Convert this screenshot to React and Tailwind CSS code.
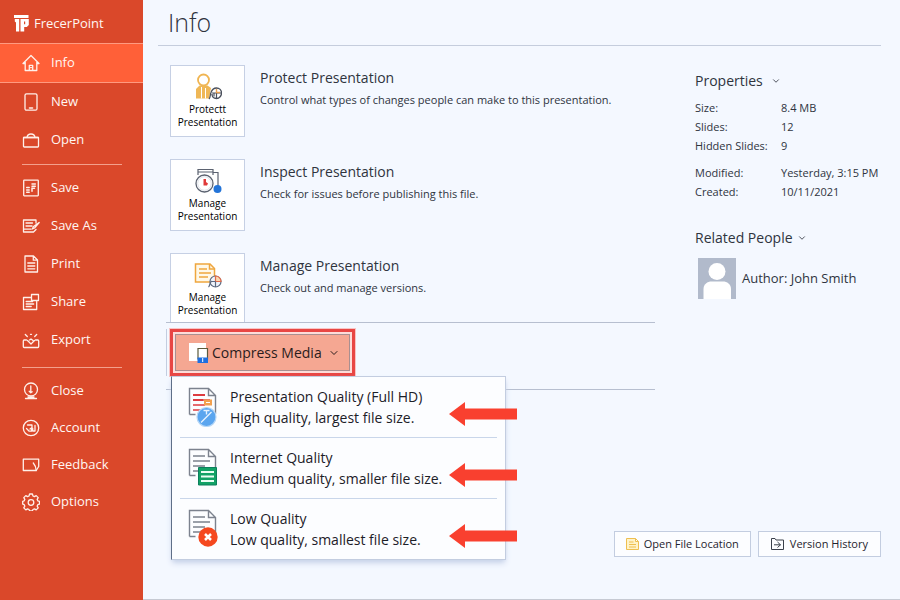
import clsx from "clsx";
import { ChevronDown } from "lucide-react";

function SideIcon({ children }) {
  return (
    <svg
      viewBox="0 0 18 18"
      className="w-[18px] h-[18px] shrink-0"
      fill="none"
      stroke="#fff0ea"
      strokeWidth="1.3"
      strokeLinejoin="round"
      strokeLinecap="round"
      aria-hidden="true"
    >
      {children}
    </svg>
  );
}

const icons = {
  info: (
    <SideIcon>
      <path d="M1 9.500 9 1.500l8 8M3.200 8v8.500h11.600V8M1 9.500h2M17 9.500h-2" />
      <path d="M7.300 16v-4.600h3.400V16M8.600 13.600h.8" />
    </SideIcon>
  ),
  new: (
    <SideIcon>
      <rect x="3" y="0.800" width="12" height="16.400" rx="1.500" />
      <path d="M7.500 15h3" strokeWidth="1.600" />
    </SideIcon>
  ),
  open: (
    <SideIcon>
      <rect x="1.500" y="6.500" width="15" height="9.500" rx="0.800" />
      <path d="M1.500 6.500h15M5 6.300C5.300 4 7 3 9 3s3.700 1 4 3.300" />
    </SideIcon>
  ),
  save: (
    <SideIcon>
      <rect x="1.700" y="1.200" width="14.600" height="15.600" rx="0.500" />
      <path d="M10 5h3.300M10 7.200h3.300M10 9v3.200M4.700 8.600h2.500M4.700 11h2.500M4.700 13.300h2.500M12.500 9.200H10" strokeWidth="1.500" />
    </SideIcon>
  ),
  saveAs: (
    <SideIcon>
      <path d="M14 6V3H1.500v12h10l2.500-2.500M4 6h6.500M4 9h6M1.500 12.200h7.500M10.300 12l1.200-2.500L17.200 5.500 12.500 11z" />
    </SideIcon>
  ),
  print: (
    <SideIcon>
      <path d="M3 1h8.500L15.500 5v12H3zM11.300 1v4.200h4" />
      <path d="M5.800 8h7M5.800 11h7M5.800 13.800h7" />
    </SideIcon>
  ),
  share: (
    <SideIcon>
      <path d="M9 4.500H1.500v12h13.200V8.500M4.200 8.500h6.500M4.200 11h7.500M4.200 13.500h5" />
      <rect x="9.500" y="1.500" width="7" height="6" />
    </SideIcon>
  ),
  export: (
    <SideIcon>
      <path d="M4.500 9H2.200c-.5 0-.9.400-.9.900v5.700c0 .5.400.9.900.9h13.600c.5 0 .9-.4.900-.9V9.900c0-.5-.4-.9-.9-.9h-2.300" />
      <path d="M5.500 9.500 9 13l3.500-3.500M7.500 9 9 8l2 1.500M3.300 3.500l2 2M14.700 3.500l-2 2M8.500 3.300h1" />
    </SideIcon>
  ),
  close: (
    <SideIcon>
      <circle cx="9" cy="7.500" r="6.500" />
      <path d="M3.500 16.500h11M8.800 4v6.500M7.200 9.200l1.600 1.600 1.400-1M6 15h6" />
    </SideIcon>
  ),
  account: (
    <SideIcon>
      <circle cx="9" cy="9" r="7.700" />
      <path d="M5.500 6h4.500v2.500L8 10M4.500 9.500l2.700 2.700h2.300V10M13 6.500v5.500h-2.300V9.500" />
    </SideIcon>
  ),
  feedback: (
    <SideIcon>
      <path d="M1.300 3.200h15.400v7.300l-2.500 4H1.300z" />
      <path d="M11.300 7c1.600 1.800 2.600 4 2.900 7.500" />
    </SideIcon>
  ),
  options: (
    <SideIcon>
      <path d="M7.600 1h2.800l.6 2 1.400.6 1.800-1 2 2-1 1.800.6 1.400 1.700.5v2.800l-1.700.6-.6 1.400 1 1.800-2 2-1.800-1-1.400.6-.6 1.300H7.600L7 16.500l-1.400-.6-1.800 1-2-2 1-1.800-.6-1.400L.7 11.100V8.300l1.500-.5.600-1.400-1-1.800 2-2 1.800 1L7 3z" />
      <circle cx="9" cy="9.500" r="2.800" />
    </SideIcon>
  ),
};

const navGroups = [
  [
    { label: "Info", icon: icons.info, active: true },
    { label: "New", icon: icons.new },
    { label: "Open", icon: icons.open },
  ],
  [
    { label: "Save", icon: icons.save },
    { label: "Save As", icon: icons.saveAs },
    { label: "Print", icon: icons.print },
    { label: "Share", icon: icons.share },
    { label: "Export", icon: icons.export },
  ],
  [
    { label: "Close", icon: icons.close },
    { label: "Account", icon: icons.account },
    { label: "Feedback", icon: icons.feedback },
    { label: "Options", icon: icons.options },
  ],
];

function Logo() {
  return (
    <svg viewBox="0 0 16 17" className="w-4 h-[17px]" fill="#fff" aria-hidden="true">
      <path d="M0 0h14.500v3H0zM.8 4h4.400v12.500H2V7.500L.8 6.500zM6.500 4h8.300v6l-2 2h-2.600v4.500H6.500z" />
      <path d="M10 6.500h1.200v2.800H10z" fill="#dc4a2a" />
    </svg>
  );
}

function Sidebar() {
  return (
    <aside className="w-[143px] shrink-0 bg-[#da482a] text-[#fff6f2]">
      <div className="flex items-center gap-1 h-[43px] pl-[14px] pt-1 text-[13px]">
        <Logo />
        FrecerPoint
      </div>
      <nav>
        {navGroups.map((group, i) => (
          <div key={i}>
            {i > 0 && (
              <hr className={clsx("ml-[22px] mr-[21px] border-[#f3a08c] mb-1", i === 1 ? "mt-[5px]" : "mt-2")} />
            )}
            {group.map((item) => (
              <button
                key={item.label}
                type="button"
                className={clsx(
                  "flex items-center gap-[11px] w-full pl-[22px] text-[13px]",
                  item.active && "h-10 bg-[#ff6038] border-y border-[#ff9a80]",
                  !item.active && (i === 2 ? "h-[37px]" : "h-[38px]")
                )}
              >
                {item.icon}
                {item.label}
              </button>
            ))}
          </div>
        ))}
      </nav>
    </aside>
  );
}

function ProtectIcon() {
  return (
    <svg viewBox="0 0 28 28" className="w-7 h-7" fill="none" aria-hidden="true">
      <circle cx="9.500" cy="7" r="5.500" stroke="#f0b552" strokeWidth="1.800" />
      <path d="M2 16 5.500 12.500h8L17 15l-2 10.500H2z" fill="#efb756" />
      <path d="M7.500 14v11.500M11.500 15v10.500" stroke="#fff" strokeWidth="1" />
      <path d="M15 26c1.500-1.500 1-4 2-6.500.9-2.500 3-4.500 5.500-4.500 3 0 5 2.300 5 5s-2 5.500-5 5.500-4.500-2-4.500-4.500" fill="#fff" stroke="#4a505c" strokeWidth="1.300" />
      <path d="M18 20h9M22.500 20v5M20 20v3.500" stroke="#4a505c" strokeWidth="1.200" />
      <path d="M22.500 16v3.500H26" stroke="#e9a050" strokeWidth="1.400" />
    </svg>
  );
}

function InspectIcon() {
  return (
    <svg viewBox="0 0 28 28" className="w-7 h-7" fill="none" stroke="#5b6270" strokeWidth="1.200" aria-hidden="true">
      <path d="M4 8V2.500h15V8M4 5h15M19 5.500h5V20" />
      <circle cx="10.500" cy="16.500" r="8.500" fill="#fff" strokeWidth="1.300" />
      <circle cx="10.500" cy="16.500" r="6.800" stroke="#d5dae3" strokeWidth="0.800" />
      <path d="M9.500 12H12v3l2 1.500-1 2H9.500z" fill="#e03a3a" stroke="none" />
      <circle cx="23.500" cy="22" r="4" fill="#2374d8" stroke="none" />
    </svg>
  );
}

function ManageIcon() {
  return (
    <svg viewBox="0 0 28 28" className="w-7 h-7" fill="none" stroke="#efa63e" strokeWidth="1.500" aria-hidden="true">
      <path d="M1.500 3h14.500l4.500 4.500V21h-19z" fill="#fff8e8" />
      <path d="M15.500 3v5h5M5 8h8M5 12h12M5 16h9" />
      <circle cx="21.500" cy="20.500" r="5.500" fill="#eef3fb" stroke="#5d6a80" strokeWidth="1.200" />
      <path d="M21.500 15v5.500H27A5.500 5.500 0 0 0 21.500 15z" fill="#f8d8b0" stroke="#e26a4a" strokeWidth="1.200" />
      <path d="M21.500 20.500V26M16.500 20.500h5M14.500 26c1.500-1 1-4 3-6" stroke="#5d6a80" strokeWidth="1.200" />
    </svg>
  );
}

const sections = [
  {
    title: "Protect Presentation",
    text: "Control what types of changes people can make to this presentation.",
    button: "Protectt",
    icon: <ProtectIcon />,
  },
  {
    title: "Inspect Presentation",
    text: "Check for issues before publishing this file.",
    button: "Manage",
    icon: <InspectIcon />,
  },
  {
    title: "Manage Presentation",
    text: "Check out and manage versions.",
    button: "Manage",
    icon: <ManageIcon />,
  },
];

function Section({ title, text, button, icon, last }) {
  return (
    <section className="flex gap-[15px] pl-1">
      <button
        type="button"
        className={clsx(
          "flex flex-col items-center w-[75px] shrink-0 pt-[7px] bg-white border border-[#c6d0e4] text-[10px] leading-[13px] font-medium text-black",
          last ? "h-[69px] border-b-0" : "h-[72px]"
        )}
      >
        {icon}
        <span className="mt-[2px]">
          {button}
          <br />
          Presentation
        </span>
      </button>
      <div className="pt-[3px]">
        <h2 className="text-sm leading-5">{title}</h2>
        <p className="mt-1 text-[11px] leading-4">{text}</p>
      </div>
    </section>
  );
}

function PageIcon({ lines = "#7b818d", children }) {
  return (
    <svg viewBox="0 0 30 40" className="w-[30px] h-10 shrink-0" fill="none" aria-hidden="true">
      <path d="M1.500 27.500v-26h19l7 7V27M1.500 27.500h6M20.500 1.500v7h7" stroke="#7c828e" strokeWidth="1.400" />
      <path d="M5 8h12M5 13h17M5 18h12M5 23h8" stroke={lines} strokeWidth="1.500" />
      {children}
    </svg>
  );
}

const qualities = [
  {
    title: "Presentation Quality (Full HD)",
    text: "High quality, largest file size.",
    icon: (
      <PageIcon lines="#dd3b40">
        <path d="M5 8h12M5 13h10" stroke="#dd3b40" strokeWidth="2" />
        <path d="M16 12.500h8v6h-8z" fill="#f3a04e" />
        <path d="M18 15.500h4" stroke="#fff" />
        <circle cx="18.500" cy="30" r="9.500" fill="#5aa5ef" stroke="#b5d6f6" strokeWidth="1.200" />
        <path d="m13 35.500 10.500-10.500M15.500 23.500h6M18.500 23.500v4" stroke="#e5f2ff" strokeWidth="1.400" />
      </PageIcon>
    ),
  },
  {
    title: "Internet Quality",
    text: "Medium quality, smaller file size.",
    icon: (
      <PageIcon>
        <path d="M10.500 19.500h18V37h-18z" fill="#12a266" stroke="#0c7f5d" />
        <path d="M13 24h13M13 28.500h13M13 33h13" stroke="#eafff4" strokeWidth="1.800" />
      </PageIcon>
    ),
  },
  {
    title: "Low Quality",
    text: "Low quality, smallest file size.",
    icon: (
      <PageIcon>
        <circle cx="20" cy="28" r="9.700" fill="#f5481f" />
        <path d="m17 25 6 6M23 25l-6 6" stroke="#fff" strokeWidth="2.500" />
      </PageIcon>
    ),
  },
];

function CompressMenu() {
  return (
    <ul className="absolute left-1 top-full w-[335px] px-2 bg-[#fcfdff] border border-[#c3cde0] border-l-[#5f6f88] shadow-md shadow-[#c9d4ea] text-[#1c2028]">
      {qualities.map((q, i) => (
        <li key={q.title} className={clsx("relative", i > 0 && "border-t border-[#c9d6ea]")}>
          <button type="button" className="flex items-center gap-3 w-full h-[60px] pl-2 text-left text-sm">
            {q.icon}
            <span className="leading-[21px]">
              {q.title}
              <br />
              {q.text}
            </span>
          </button>
          <svg viewBox="0 0 68 24" className="absolute -right-5 top-[25px] w-[68px] h-6" fill="#f9402f" aria-hidden="true">
            <path d="M0 12 16 0v6.500h52v11H16V24z" />
          </svg>
        </li>
      ))}
    </ul>
  );
}

function CompressMedia() {
  return (
    <div className="w-[489px] border-t border-b border-[#b7bfd0] h-[68px] pt-[6px]">
      <div className="relative h-[47px] pl-[3px] border-l border-[#c3cde0]">
        <div className="w-[185px] p-[2px] bg-[#fddcd8] border-[3px] border-[#e84644] outline-1 outline-[#f8c4c4]">
          <button
            type="button"
            className="flex items-center w-full h-[37px] pl-[13px] bg-[#f5a792] border border-[#a98f90] text-sm text-[#2b1c1c]"
          >
            <svg viewBox="0 0 20 20" className="w-5 h-5" fill="none" aria-hidden="true">
              <path d="M0 0h17v18H0z" fill="#fff" />
              <path d="M9 5.500h9.500V16H9z" fill="#fff" stroke="#5b5a3c" strokeWidth="1.200" />
              <path d="M8.500 14.500H19V20H8.500z" fill="#1f6fe0" />
              <path d="M13.700 15v4" stroke="#fff" />
            </svg>
            <span className="ml-[3px]">Compress Media</span>
            <ChevronDown className="ml-[6px] w-3 h-3" />
          </button>
        </div>
        <CompressMenu />
      </div>
    </div>
  );
}

const properties = [
  ["Size:", "8.4 MB"],
  ["Slides:", "12"],
  ["Hidden Slides:", "9"],
  ["Modified:", "Yesterday, 3:15 PM"],
  ["Created:", "10/11/2021"],
];

function Details() {
  return (
    <aside className="w-[186px] shrink-0 pt-[6px]">
      <h2 className="flex items-center gap-2 text-sm leading-5">
        Properties
        <ChevronDown className="w-[10px] h-[10px]" />
      </h2>
      <dl className="mt-[7px] text-[11px] leading-[19px]">
        {properties.map(([name, value]) => (
          <div key={name} className={clsx("flex", name === "Modified:" && "mt-2")}>
            <dt className="w-[86px]">{name}</dt>
            <dd className="whitespace-nowrap">{value}</dd>
          </div>
        ))}
      </dl>
      <h2 className="flex items-center gap-1 mt-[27px] text-sm leading-5">
        Related People
        <ChevronDown className="w-[10px] h-[10px]" />
      </h2>
      <div className="flex items-center gap-[6px] mt-[10px] pl-[3px] text-[13px] whitespace-nowrap">
        <svg viewBox="0 0 38 41" className="w-[38px] h-[41px]" aria-hidden="true">
          <path d="M0 0h38v41H0z" fill="#b1bacb" />
          <circle cx="19" cy="13.500" r="8.500" fill="#fff" />
          <path d="M5.500 41V31c0-5 4-7.500 8-7.500h11.500c4 0 8 2.500 8 7.500v10z" fill="#fff" />
        </svg>
        Author: John Smith
      </div>
    </aside>
  );
}

export default function App() {
  return (
    <div className="flex min-h-screen bg-[#f4f8ff] text-[#2f343e] font-['Open_Sans','Noto_Sans',sans-serif]">
      <Sidebar />
      <main className="flex flex-col flex-1 pl-[15px] pr-[19px] border-b border-[#c6cad3]">
        <h1 className="h-[46px] pl-[10px] border-b border-[#c5cddd] text-[25px] leading-[44px] font-light">Info</h1>
        <div className="flex justify-between pl-2 pt-[19px]">
          <div>
            <div className="flex flex-col gap-[22px]">
              {sections.map((s, i) => (
                <Section key={s.title} {...s} last={i === sections.length - 1} />
              ))}
            </div>
            <CompressMedia />
          </div>
          <Details />
        </div>
        <div className="flex justify-end gap-[7px] mt-auto pb-[42px] text-[11px] text-[#1f242e]">
          <button type="button" className="flex items-center gap-[5px] h-[26px] px-[11px] bg-[#fcfdff] border border-[#c3cde0]">
            <svg viewBox="0 0 13 12" className="w-[13px] h-3" fill="#fff3c8" stroke="#eebf50" aria-hidden="true">
              <path d="M.5.500h9l3 3v8H.5zM9.500.500v3h3M3 4h4.500M3 6.500h7M3 9h7" />
            </svg>
            Open File Location
          </button>
          <button type="button" className="flex items-center gap-[6px] h-[26px] px-3 bg-[#fcfdff] border border-[#c3cde0]">
            <svg viewBox="0 0 13 12" className="w-[13px] h-3" fill="none" stroke="#3a404b" aria-hidden="true">
              <path d="M.5 11.500V.500H4l1 1.500h7.500v9.500zM3 6.800h6.500M6.500 4l3 2.800-3 2.700" />
            </svg>
            Version History
          </button>
        </div>
      </main>
    </div>
  );
}
